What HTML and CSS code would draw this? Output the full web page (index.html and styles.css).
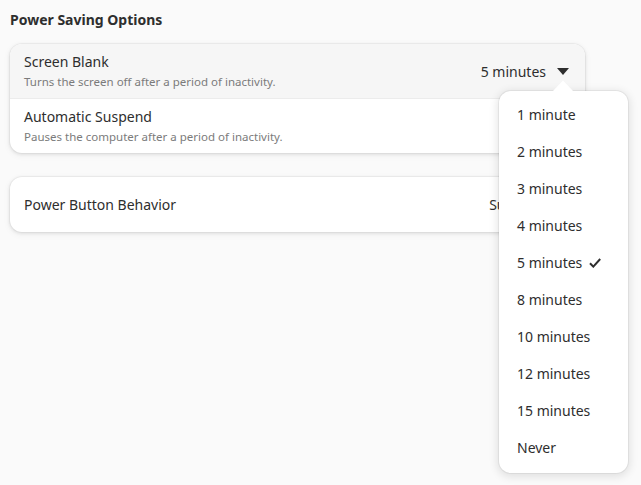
FILE: index.html
```html
<!DOCTYPE html>
<html>
<head>
<meta charset="utf-8">
<link rel="stylesheet" href="styles.css">
</head>
<body>
<div class="page">
  <h2 class="group-title">Power Saving Options</h2>
  <div class="card">
    <div class="row active">
      <div class="labels">
        <div class="title">Screen Blank</div>
        <div class="subtitle">Turns the screen off after a period of inactivity.</div>
      </div>
      <div class="combo">
        <span>5 minutes</span>
        <svg class="caret" width="12" height="7" viewBox="0 0 12 7"><path d="M0 0 L12 0 L6 7 Z" fill="#2e2e2e"/></svg>
      </div>
    </div>
    <div class="row">
      <div class="labels">
        <div class="title">Automatic Suspend</div>
        <div class="subtitle">Pauses the computer after a period of inactivity.</div>
      </div>
    </div>
  </div>
  <div class="card card-gap">
    <div class="row">
      <div class="labels">
        <div class="title">Power Button Behavior</div>
      </div>
      <div class="combo">
        <span>Suspend</span>
        <svg class="caret" width="12" height="7" viewBox="0 0 12 7"><path d="M0 0 L12 0 L6 7 Z" fill="#2e2e2e"/></svg>
      </div>
    </div>
  </div>
</div>
<div class="popover">
  <svg class="pointer" width="22" height="12" viewBox="0 0 22 12"><path d="M0 12 L11 0.5 L22 12 Z" fill="#ffffff"/></svg>
  <ul class="menu">
    <li>1 minute</li>
    <li>2 minutes</li>
    <li>3 minutes</li>
    <li>4 minutes</li>
    <li class="checked">5 minutes <svg class="check" width="12" height="10" viewBox="0 0 12 10"><path d="M1 5.2 L4.3 8.6 L11.2 1" fill="none" stroke="#2e2e2e" stroke-width="2"/></svg></li>
    <li>8 minutes</li>
    <li>10 minutes</li>
    <li>12 minutes</li>
    <li>15 minutes</li>
    <li>Never</li>
  </ul>
</div>
</body>
</html>
```
FILE: styles.css
```css
html, body {
  margin: 0;
  padding: 0;
}
body {
  background: #fafafa;
  font-family: "Noto Sans", "Open Sans", sans-serif;
  color: #2e2e2e;
  width: 641px;
  height: 485px;
  overflow: hidden;
  position: relative;
}
.page {
  padding: 9px 56px 0 10px;
}
.group-title {
  margin: 0 0 13px 0;
  font-size: 14px;
  font-weight: 700;
  line-height: 22px;
  color: #2e2e2e;
}
.card {
  background: #ffffff;
  border-radius: 12px;
  box-shadow: 0 0 0 1px rgba(0,0,0,0.03), 0 1px 3px 1px rgba(0,0,0,0.07), 0 2px 6px 2px rgba(0,0,0,0.03);
  overflow: hidden;
}
.card-gap {
  margin-top: 24px;
}
.row {
  display: flex;
  align-items: center;
  justify-content: space-between;
  min-height: 55px;
  padding: 0 16px 0 14px;
  box-sizing: border-box;
}
.row + .row {
  border-top: 1px solid #ececec;
}
.row.active {
  background: #f6f6f6;
  min-height: 54px;
}
.labels {
  display: flex;
  flex-direction: column;
}
.title {
  font-size: 14px;
  line-height: 18px;
  color: #2e2e2e;
}
.subtitle {
  margin-top: 3px;
  font-size: 11.5px;
  line-height: 16px;
  color: #7b7b7b;
}
.combo {
  display: flex;
  align-items: center;
  gap: 11px;
  font-size: 14px;
  color: #2e2e2e;
}
.caret {
  display: block;
}
.popover {
  position: absolute;
  left: 499px;
  top: 91px;
  width: 129px;
  background: #ffffff;
  border-radius: 12px;
  box-shadow: 0 0 0 1px rgba(0,0,0,0.05), 0 2px 8px 2px rgba(0,0,0,0.10);
}
.pointer {
  position: absolute;
  left: 53px;
  top: -11px;
  display: block;
}
.menu {
  list-style: none;
  margin: 0;
  padding: 5px 6px 7px 6px;
}
.menu li {
  height: 37px;
  display: flex;
  align-items: center;
  gap: 7px;
  padding-left: 12px;
  font-size: 14px;
  color: #2e2e2e;
}
.check {
  display: block;
}
```
